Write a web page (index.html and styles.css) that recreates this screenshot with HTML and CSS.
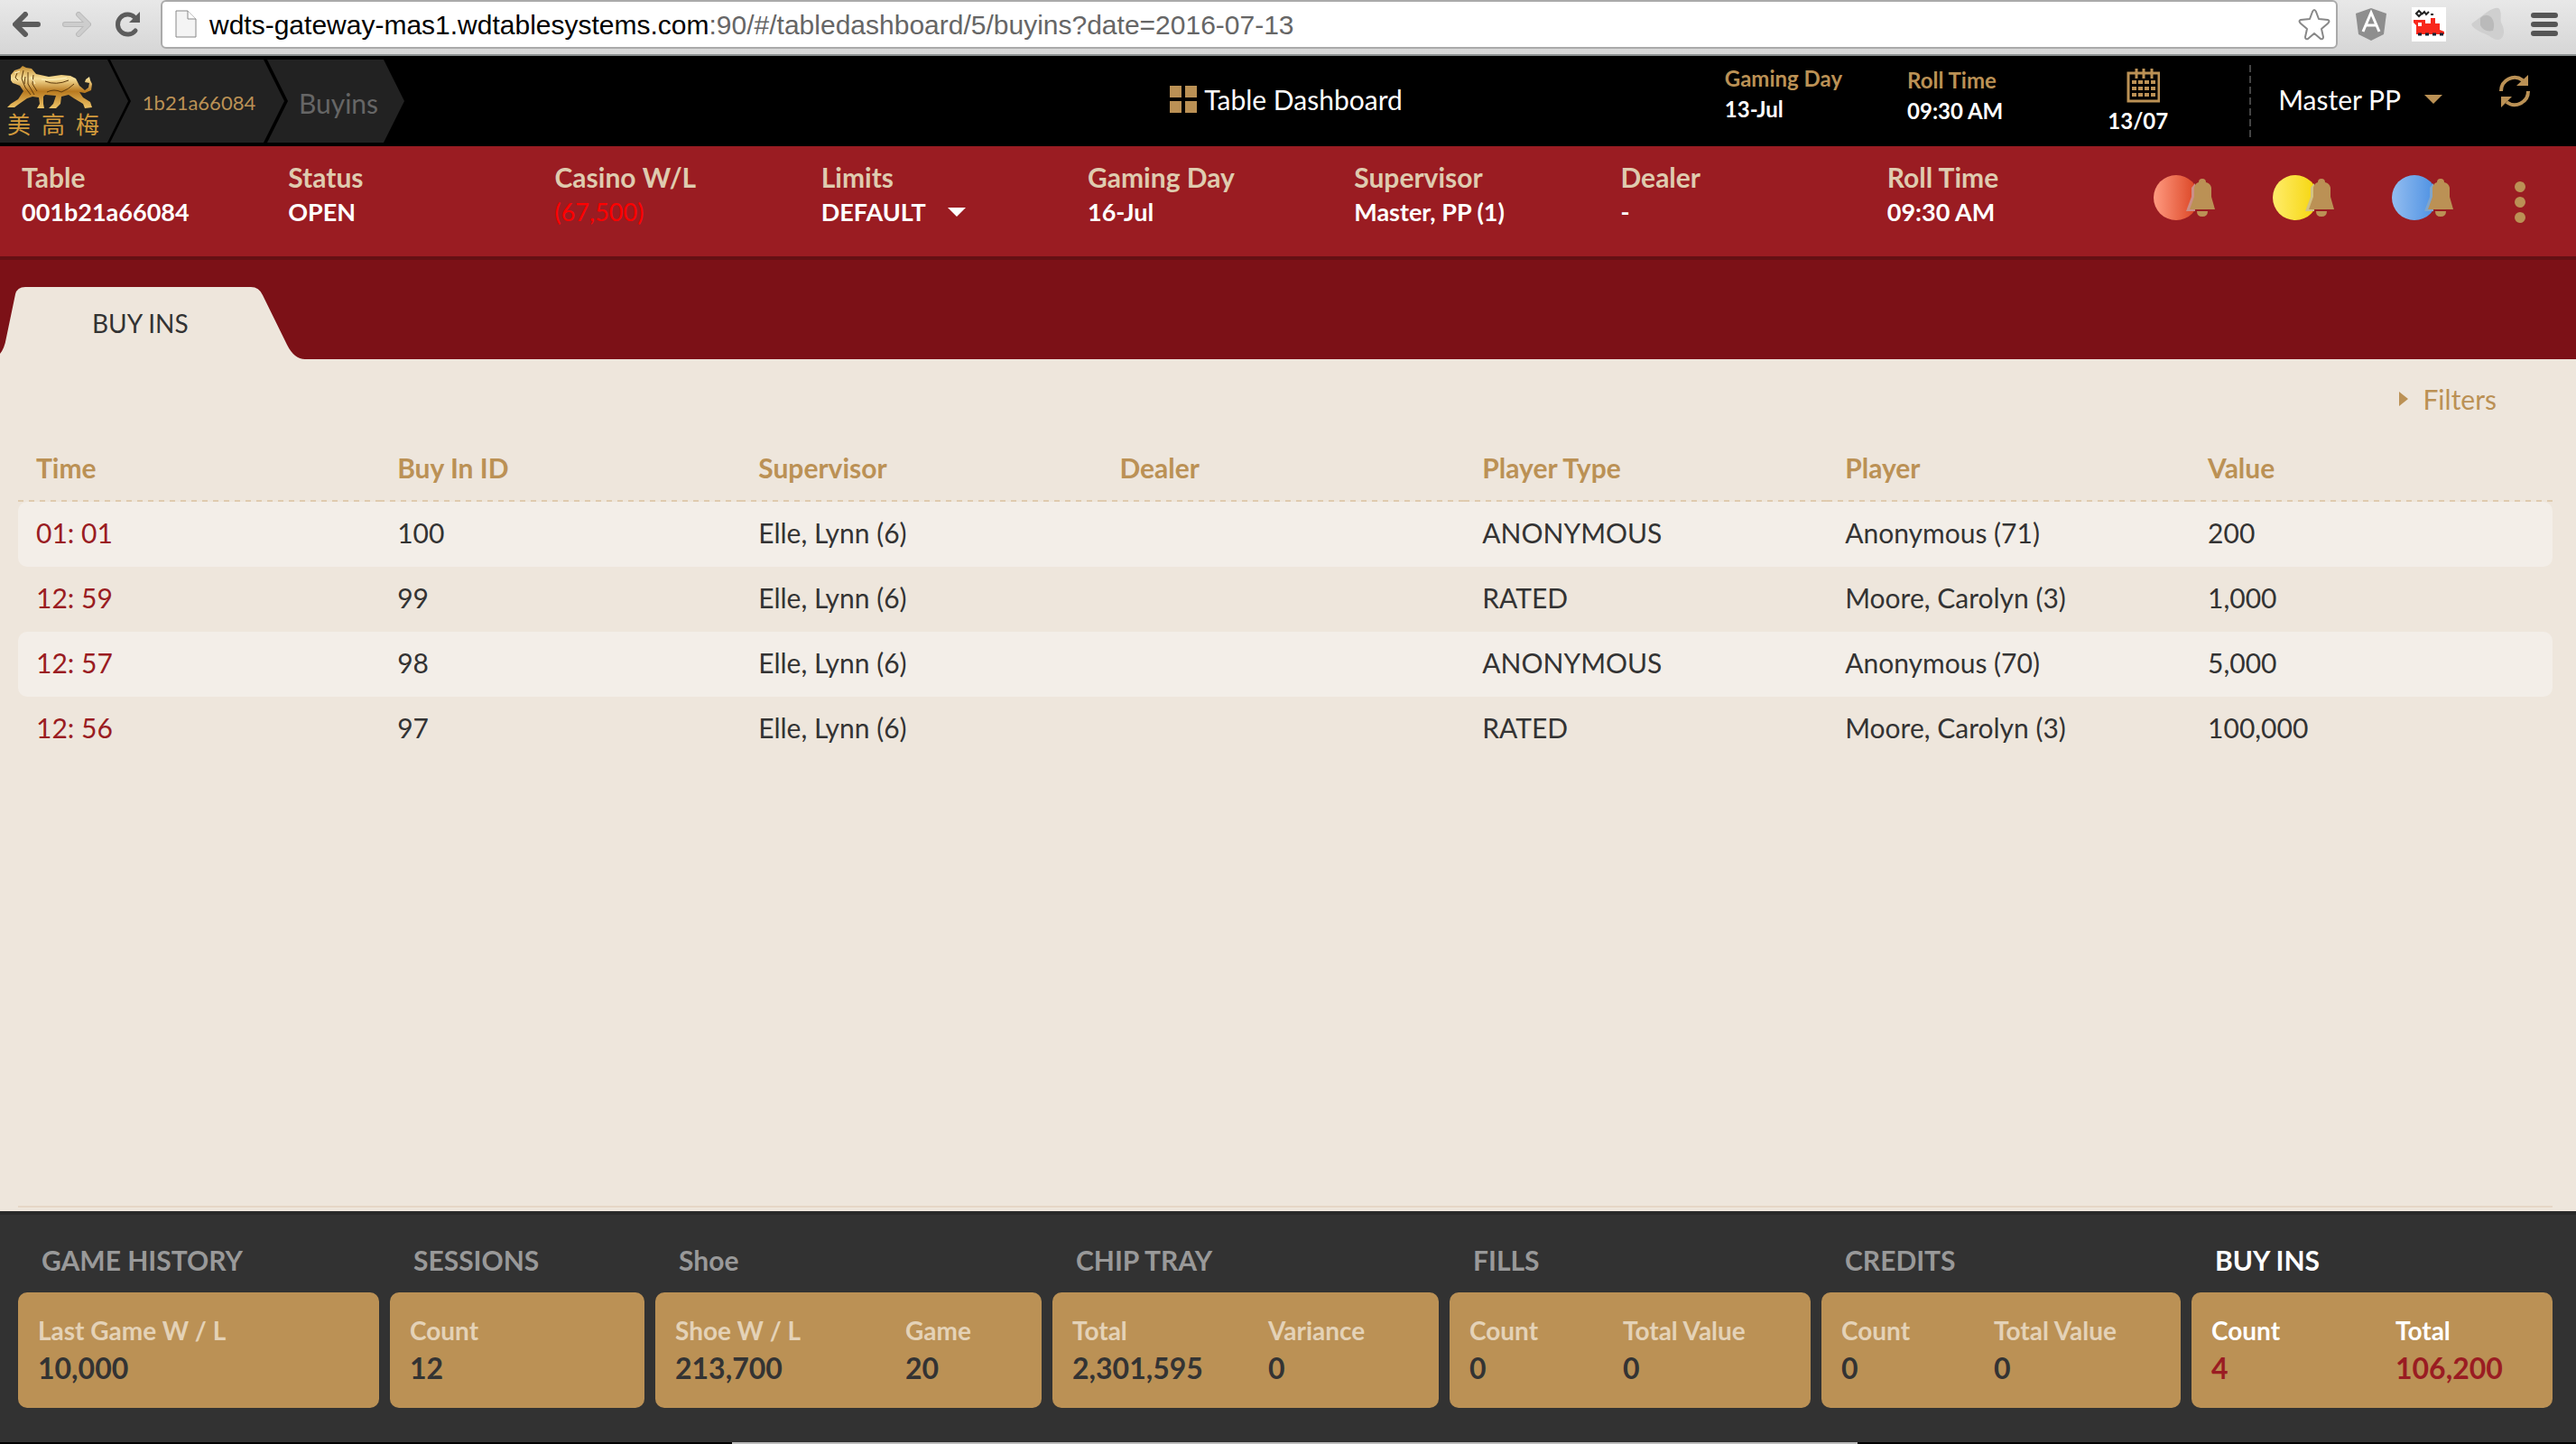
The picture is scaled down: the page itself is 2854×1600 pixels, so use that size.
FILE: index.html
```html
<!DOCTYPE html>
<html lang="en">
<head>
<meta charset="utf-8">
<title>Table Dashboard - Buy Ins</title>
<link rel="stylesheet" href="styles.css">
</head>
<body>
<div class="browser">
  <div class="nav">
    <button type="button" aria-label="Back">
      <svg width="32" height="28" viewBox="0 0 32 28"><path d="M28 14H4M14 3L3 14L14 25" fill="none" stroke="#5c5c5c" stroke-width="6" stroke-linecap="round" stroke-linejoin="round"/></svg>
    </button>
    <button type="button" aria-label="Forward">
      <svg width="32" height="28" viewBox="0 0 32 28"><path d="M3 14H27M18 3L29 14L18 25" fill="none" stroke="#b9b9b9" stroke-width="6" stroke-linecap="round" stroke-linejoin="round"/><path d="M3 14H27M18 3L29 14L18 25" fill="none" stroke="#cdcdcd" stroke-width="4" stroke-linecap="round" stroke-linejoin="round"/></svg>
    </button>
    <button type="button" aria-label="Reload">
      <svg width="34" height="28" viewBox="0 0 34 28"><path d="M26 21A11 11 0 1 1 25 6" fill="none" stroke="#5c5c5c" stroke-width="5" stroke-linecap="round"/><path d="M31 0V12H19Z" fill="#5c5c5c"/></svg>
    </button>
  </div>
  <div class="address">
    <svg width="24" height="32" viewBox="0 0 24 32"><path d="M1 1H14L23 10V30H1Z" fill="#f4f4f4" stroke="#888" stroke-width="1"/><path d="M14 1V10H23" fill="#fff" stroke="#888" stroke-width="1"/></svg>
    <p class="url"><span class="host">wdts-gateway-mas1.wdtablesystems.com</span>:90/#/tabledashboard/5/buyins?date=2016-07-13</p>
    <svg width="36" height="36" viewBox="0 0 36 36"><path d="M16 4Q18 0 20 4L23 12L33 13Q36 14 33 17L26 23L28 32Q28 35 25 34L18 28L11 34Q8 35 8 32L10 23L3 17Q0 14 3 13L13 12Z" fill="#fff" stroke="#888" stroke-width="2" stroke-linejoin="round"/></svg>
  </div>
  <div class="extensions">
    <svg width="34" height="38" viewBox="0 0 34 38"><path d="M17 1L34 7L31 30L17 37L3 30L0 7Z" fill="#8e8e8e"/><path d="M8 27L17 6L26 27M12 20H22" fill="none" stroke="#fff" stroke-width="3"/></svg>
    <svg width="38" height="38" viewBox="0 0 38 38"><path d="M0 0H38V38H0Z" fill="#fff"/><path d="M2 14H15V18H21V12H26V18H31V25L36 27V30H5V20L2 17Z" fill="#f8281c"/><path d="M7 17H11V21H7Z" fill="#fff"/><path d="M5 7L8 4L11 7L8 10ZM11 8L14 5L16 8L19 5M21 8H24" fill="none" stroke="#222" stroke-width="2"/><path d="M7 30H11M15 30H19M23 30H27M31 30H35" stroke="#123" stroke-width="3"/></svg>
    <svg width="38" height="38" viewBox="0 0 38 38"><path d="M14 8C20 3 31 -3 32 4C34 9 31 14 34 19C38 27 36 36 29 36C24 36 20 31 14 29C8 27 -4 20 2 17Z" fill="#cfcfcf"/><path d="M10 12Q16 6 22 11Q27 17 24 26Q14 28 10 20Z" fill="#bababa"/></svg>
    <svg width="30" height="28" viewBox="0 0 30 28"><path d="M3 4H27M3 14H27M3 24H27" stroke="#555" stroke-width="6" stroke-linecap="round"/></svg>
  </div>
</div>

<header class="topbar">
  <nav class="crumbs" aria-label="Breadcrumb">
    <a class="crumb crumb-logo" href="#" aria-label="Home">
      <svg width="98" height="48" viewBox="0 0 98 48"><defs><linearGradient id="gold" x1="0" y1="0" x2="0" y2="1"><stop offset="0" stop-color="#c28a2c"/><stop offset=".3" stop-color="#f8e09a"/><stop offset=".6" stop-color="#b8791f"/><stop offset="1" stop-color="#eec468"/></linearGradient></defs>
      <path d="M4 16L4 10L8 5L14 3L17 0L21 2L27 3L32 9L46 12L60 10L70 11L76 14L80 22L86 27L90 24L91 19L86 18L87 15L91 12L92 16L94 20L93 27L86 30L80 29L84 35L92 40L94 46L86 47L84 42L74 36L68 32L60 34L59 42L54 47L46 47L51 42L54 33L42 32L40 34L40 42L41 47L33 47L36 42L35 35L28 34L22 36L12 43L8 46L0 46L4 42L12 37L18 28L14 22L9 20L6 19Z" fill="url(#gold)"/>
      <path d="M11 8L9 13L12 16M18 5L16 14L20 24L26 32M23 7L23 20L30 32M29 10L28 20L33 28M20 12L19 20M42 17Q54 22 68 16M44 29Q52 25 60 29Q68 26 74 20" fill="none" stroke="#5e3a0c" stroke-width="1"/><path d="M38 15Q50 17 66 13M8 8L14 6M26 12L31 20" fill="none" stroke="#fff3c0" stroke-width="1"/></svg>
      <span class="logo-text"><span>美</span><span>高</span><span>梅</span></span>
    </a>
    <a class="crumb crumb-table" href="#">1b21a66084</a>
    <a class="crumb crumb-page" href="#">Buyins</a>
  </nav>
  <h1 class="title">
    <svg width="30" height="30" viewBox="0 0 30 30"><path d="M0 0H13V13H0ZM17 0H30V13H17ZM0 17H13V30H0ZM17 17H30V30H17Z" fill="#bb9155"/></svg>
    Table Dashboard
  </h1>
  <div class="top-right">
    <dl class="top-fact fact-day"><dt>Gaming Day</dt><dd>13-Jul</dd></dl>
    <dl class="top-fact fact-roll"><dt>Roll Time</dt><dd>09:30 AM</dd></dl>
    <button class="calendar" type="button">
      <svg width="48" height="38" viewBox="0 0 48 38"><path d="M13 5H47V36H13Z" fill="none" stroke="#bb9155" stroke-width="3"/><path d="M22 0V11M30 0V11M39 0V11" stroke="#bb9155" stroke-width="3"/><path d="M17 15H44M17 22H44M17 29H44" stroke="#bb9155" stroke-width="4" stroke-dasharray="5 2"/></svg>
      13/07
    </button>
    <button class="user" type="button">Master PP
      <svg width="20" height="10" viewBox="0 0 20 10"><path d="M0 0H20L10 10Z" fill="#bb9155"/></svg>
    </button>
    <button class="refresh" type="button" aria-label="Refresh">
      <svg width="36" height="36" viewBox="0 0 36 36"><path d="M3 18A15 15 0 0 1 27 6M33 18A15 15 0 0 1 9 30" fill="none" stroke="#bb9155" stroke-width="4"/><path d="M33 0V12H20ZM3 36V24H15Z" fill="#bb9155"/></svg>
    </button>
  </div>
</header>

<section class="statusbar">
  <dl class="facts">
    <div><dt>Table</dt><dd>001b21a66084</dd></div>
    <div><dt>Status</dt><dd>OPEN</dd></div>
    <div><dt>Casino W/L</dt><dd class="negative">(67,500)</dd></div>
    <div><dt>Limits</dt><dd><button class="limits" type="button">DEFAULT <svg width="20" height="10" viewBox="0 0 20 10"><path d="M0 0H20L10 10Z" fill="#fff"/></svg></button></dd></div>
    <div><dt>Gaming Day</dt><dd>16-Jul</dd></div>
    <div><dt>Supervisor</dt><dd>Master, PP (1)</dd></div>
    <div><dt>Dealer</dt><dd>-</dd></div>
    <div><dt>Roll Time</dt><dd>09:30 AM</dd></div>
  </dl>
  <div class="alerts">
    <button type="button" aria-label="Red alert"><svg width="70" height="50" viewBox="0 0 70 50"><defs><linearGradient id="red"><stop offset="0" stop-color="#ff9a80"/><stop offset="1" stop-color="#d9401f"/></linearGradient></defs><circle cx="25" cy="25" r="25" fill="url(#red)"/><path d="M36 40L42 24V14L46 9V40Z" fill="#cb8f88"/><path d="M40 38L45 24V14Q46 9 50 8Q50 4 54 4Q58 4 58 8Q63 9 64 14V24L68 38ZM48 40H60Q60 46 54 46Q48 46 48 40Z" fill="#bb9155"/></svg></button>
    <button type="button" aria-label="Yellow alert"><svg width="70" height="50" viewBox="0 0 70 50"><defs><linearGradient id="yellow"><stop offset="0" stop-color="#ffec6a"/><stop offset="1" stop-color="#f5d50a"/></linearGradient></defs><circle cx="25" cy="25" r="25" fill="url(#yellow)"/><path d="M36 40L42 24V14L46 9V40Z" fill="#d3c283"/><path d="M40 38L45 24V14Q46 9 50 8Q50 4 54 4Q58 4 58 8Q63 9 64 14V24L68 38ZM48 40H60Q60 46 54 46Q48 46 48 40Z" fill="#bb9155"/></svg></button>
    <button type="button" aria-label="Blue alert"><svg width="70" height="50" viewBox="0 0 70 50"><defs><linearGradient id="blue"><stop offset="0" stop-color="#93bdf0"/><stop offset="1" stop-color="#4a8fe2"/></linearGradient></defs><circle cx="25" cy="25" r="25" fill="url(#blue)"/><path d="M36 40L42 24V14L46 9V40Z" fill="#7fa5cc"/><path d="M40 38L45 24V14Q46 9 50 8Q50 4 54 4Q58 4 58 8Q63 9 64 14V24L68 38ZM48 40H60Q60 46 54 46Q48 46 48 40Z" fill="#bb9155"/></svg></button>
    <button type="button" aria-label="More"><svg width="16" height="56" viewBox="0 0 16 56"><circle cx="10" cy="16" r="6" fill="#bb9155"/><circle cx="10" cy="33" r="6" fill="#bb9155"/><circle cx="10" cy="50" r="6" fill="#bb9155"/></svg></button>
  </div>
</section>

<div class="tabs">
  <a class="tab" href="#">
    <svg class="tab-shape" width="338" height="80" viewBox="0 0 338 80"><path d="M0 80V74Q5 68 7 56L17 8Q19 0 28 0H278Q287 0 291 9L318 64Q326 80 338 80Z" fill="#eee6dc"/></svg>
    <span>BUY INS</span>
  </a>
</div>

<main class="content">
  <button class="filters" type="button">
    <svg width="10" height="16" viewBox="0 0 10 16"><path d="M0 0L10 8L0 16Z" fill="#bb9155"/></svg>
    Filters
  </button>
  <table class="buyins">
    <thead>
      <tr><th>Time</th><th>Buy In ID</th><th>Supervisor</th><th>Dealer</th><th>Player Type</th><th>Player</th><th>Value</th></tr>
    </thead>
    <tbody>
      <tr><td>01: 01</td><td>100</td><td>Elle, Lynn (6)</td><td></td><td>ANONYMOUS</td><td>Anonymous (71)</td><td>200</td></tr>
      <tr><td>12: 59</td><td>99</td><td>Elle, Lynn (6)</td><td></td><td>RATED</td><td>Moore, Carolyn (3)</td><td>1,000</td></tr>
      <tr><td>12: 57</td><td>98</td><td>Elle, Lynn (6)</td><td></td><td>ANONYMOUS</td><td>Anonymous (70)</td><td>5,000</td></tr>
      <tr><td>12: 56</td><td>97</td><td>Elle, Lynn (6)</td><td></td><td>RATED</td><td>Moore, Carolyn (3)</td><td>100,000</td></tr>
    </tbody>
  </table>
</main>

<footer class="summary">
  <section class="panel"><h2>GAME HISTORY</h2><dl class="card"><div><dt>Last Game W / L</dt><dd>10,000</dd></div></dl></section>
  <section class="panel"><h2>SESSIONS</h2><dl class="card"><div><dt>Count</dt><dd>12</dd></div></dl></section>
  <section class="panel"><h2>Shoe</h2><dl class="card card-shoe"><div><dt>Shoe W / L</dt><dd>213,700</dd></div><div><dt>Game</dt><dd>20</dd></div></dl></section>
  <section class="panel"><h2>CHIP TRAY</h2><dl class="card card-tray"><div><dt>Total</dt><dd>2,301,595</dd></div><div><dt>Variance</dt><dd>0</dd></div></dl></section>
  <section class="panel"><h2>FILLS</h2><dl class="card card-count"><div><dt>Count</dt><dd>0</dd></div><div><dt>Total Value</dt><dd>0</dd></div></dl></section>
  <section class="panel"><h2>CREDITS</h2><dl class="card card-count"><div><dt>Count</dt><dd>0</dd></div><div><dt>Total Value</dt><dd>0</dd></div></dl></section>
  <section class="panel active"><h2>BUY INS</h2><dl class="card card-half"><div><dt>Count</dt><dd>4</dd></div><div><dt>Total</dt><dd>106,200</dd></div></dl></section>
</footer>
<div class="dock"></div>
</body>
</html>
```
FILE: styles.css
```css
* { box-sizing: border-box; }
body {
  margin: 0;
  min-height: 100vh;
  display: flex;
  flex-direction: column;
  background: #eee6dc;
  color: #333;
  font-family: Lato, "Noto Sans CJK TC", sans-serif;
  font-size: 30px;
  line-height: 36px;
}
button {
  padding: 0;
  border: 0;
  background: none;
  color: inherit;
  font: inherit;
  display: flex;
  align-items: center;
}
a { color: inherit; text-decoration: none; }
h1, h2, p, dl, dd { margin: 0; }
svg { display: block; flex: none; }

/* browser toolbar */
.browser {
  display: flex;
  align-items: center;
  height: 62px;
  padding: 0 20px 6px 14px;
  gap: 20px;
  background: linear-gradient(#e8e8e8, #d6d6d6);
  border-bottom: 2px solid #8a8f8f;
}
.nav { display: flex; gap: 23px; }
.address {
  flex: 1;
  display: flex;
  align-items: center;
  height: 54px;
  padding: 0 6px 0 14px;
  border: 2px solid #aaa;
  border-radius: 6px;
  background: #fff;
  font: 30px/36px "Liberation Sans", Arial, sans-serif;
}
.url { flex: 1; margin-left: 14px; padding-top: 2px; color: #666; }
.host { color: #000; }
.extensions { display: flex; align-items: center; gap: 28px; }

/* top bar */
.topbar {
  display: grid;
  grid-template-columns: 1fr auto 1fr;
  align-items: center;
  height: 100px;
  background: #000;
  color: #fff;
}
.crumbs { display: flex; height: 92px; }
.crumb {
  display: flex;
  align-items: center;
  justify-content: center;
  background: #222;
  clip-path: polygon(0 0, calc(100% - 23px) 0, 100% 50%, calc(100% - 23px) 100%, 0 100%, 23px 50%);
}
.crumb-logo {
  flex-direction: column;
  align-items: flex-start;
  width: 142px;
  padding: 2px 0 0 8px;
  clip-path: polygon(0 0, calc(100% - 23px) 0, 100% 50%, calc(100% - 23px) 100%, 0 100%);
}
.logo-text {
  display: flex;
  width: 102px;
  justify-content: space-between;
  color: #d29a3c;
  font: 26px/32px "Noto Sans CJK TC", sans-serif;
}
.crumb-table { width: 193px; margin-left: -20px; padding: 4px 0 0 4px; font-size: 22px; color: #bb9155; }
.crumb-page { width: 152px; margin-left: -19px; padding: 4px 0 0 6px; color: #666; }
.title {
  display: flex;
  align-items: center;
  gap: 8px;
  padding: 0 4px 4px 0;
  font-size: 30px;
  font-weight: 400;
}
.top-right { display: flex; justify-content: flex-end; align-items: center; height: 100px; padding-right: 50px; }
.top-fact { font-size: 24px; font-weight: 700; line-height: 34px; }
.top-fact dt { color: #bb9155; }
.fact-day { margin-right: 72px; padding-bottom: 16px; }
.fact-roll { margin-right: 116px; padding-bottom: 12px; }
.calendar { flex-direction: column; gap: 4px; padding-top: 2px; font-size: 24px; font-weight: 700; line-height: 32px; }
.user {
  height: 80px;
  gap: 26px;
  margin-left: 90px;
  padding: 0 0 4px 32px;
  background: repeating-linear-gradient(#444 0 8px, transparent 8px 12px) left / 2px 100% no-repeat;
}
.refresh { margin-left: 62px; padding-bottom: 22px; }

/* table status */
.statusbar {
  display: flex;
  height: 126px;
  padding: 16px 56px 0 24px;
  background: #9a1c22;
  border-bottom: 4px solid #651014;
  color: #fff;
}
.facts { flex: 1; display: grid; grid-template-columns: repeat(8, 1fr); }
.facts dt { color: #dfcbaf; font-weight: 700; }
.facts dd { font-size: 27px; font-weight: 700; line-height: 42px; }
.facts .negative { color: #f00; font-weight: 400; }
.limits { gap: 24px; }
.alerts { display: flex; gap: 62px; height: 82px; }

/* tabs */
.tabs { height: 110px; padding-top: 30px; background: #7c1117; }
.tab {
  position: relative;
  display: flex;
  align-items: center;
  width: 338px;
  height: 80px;
  padding-left: 102px;
  font-size: 28px;
}
.tab-shape { position: absolute; left: 0; top: 0; }
.tab span { position: relative; }

/* buy-ins list */
.content {
  flex: 1;
  display: flex;
  flex-direction: column;
  margin: 0 26px 4px 20px;
  padding-top: 26px;
  border-bottom: 2px solid #e6d6c6;
}
.filters { align-self: flex-end; gap: 16px; margin-right: 62px; color: #bb9155; }
.buyins { width: 100%; margin-top: 22px; border-spacing: 0; table-layout: fixed; }
.buyins th, .buyins td { height: 72px; padding: 0 20px 4px; text-align: left; }
.buyins th {
  height: 74px;
  padding-bottom: 2px;
  color: #bb9155;
  background: repeating-linear-gradient(90deg, #dfcbaf 0 6px, transparent 6px 12px) bottom / 100% 2px no-repeat;
}
.buyins th:nth-child(-n+3) { width: 14.25%; }
.buyins td:first-child { color: #9a1c22; border-radius: 10px 0 0 10px; }
.buyins td:last-child { border-radius: 0 10px 10px 0; }
.buyins tbody tr:nth-child(odd) td { background: #f3eee8; }

/* summary */
.summary {
  display: grid;
  grid-template-columns: 400fr 282fr 428fr 428fr 400fr 398fr 400fr;
  gap: 12px;
  padding: 32px 26px 38px 20px;
  background: #323232;
  border-top: 4px solid #292929;
}
.panel h2 { margin: 0 0 18px 26px; color: #999; font-size: 30px; font-weight: 700; }
.card {
  display: grid;
  height: 128px;
  padding: 22px 0 0 22px;
  border-radius: 10px;
  background: #bb9155;
}
.card dt { color: #e4d2b7; font-size: 28px; font-weight: 700; line-height: 40px; }
.card dd { font-size: 32px; font-weight: 700; line-height: 44px; }
.card-shoe { grid-template-columns: 255fr 151fr; }
.card-tray { grid-template-columns: 217fr 189fr; }
.card-count { grid-template-columns: 170fr 208fr; }
.card-half { grid-template-columns: 204fr 174fr; }
.active h2, .active dt { color: #fff; }
.active dd { color: #9a1c22; }
.dock { height: 2px; background: linear-gradient(90deg, #000 811px, #bbb 811px 2058px, #000 2058px); }
```
